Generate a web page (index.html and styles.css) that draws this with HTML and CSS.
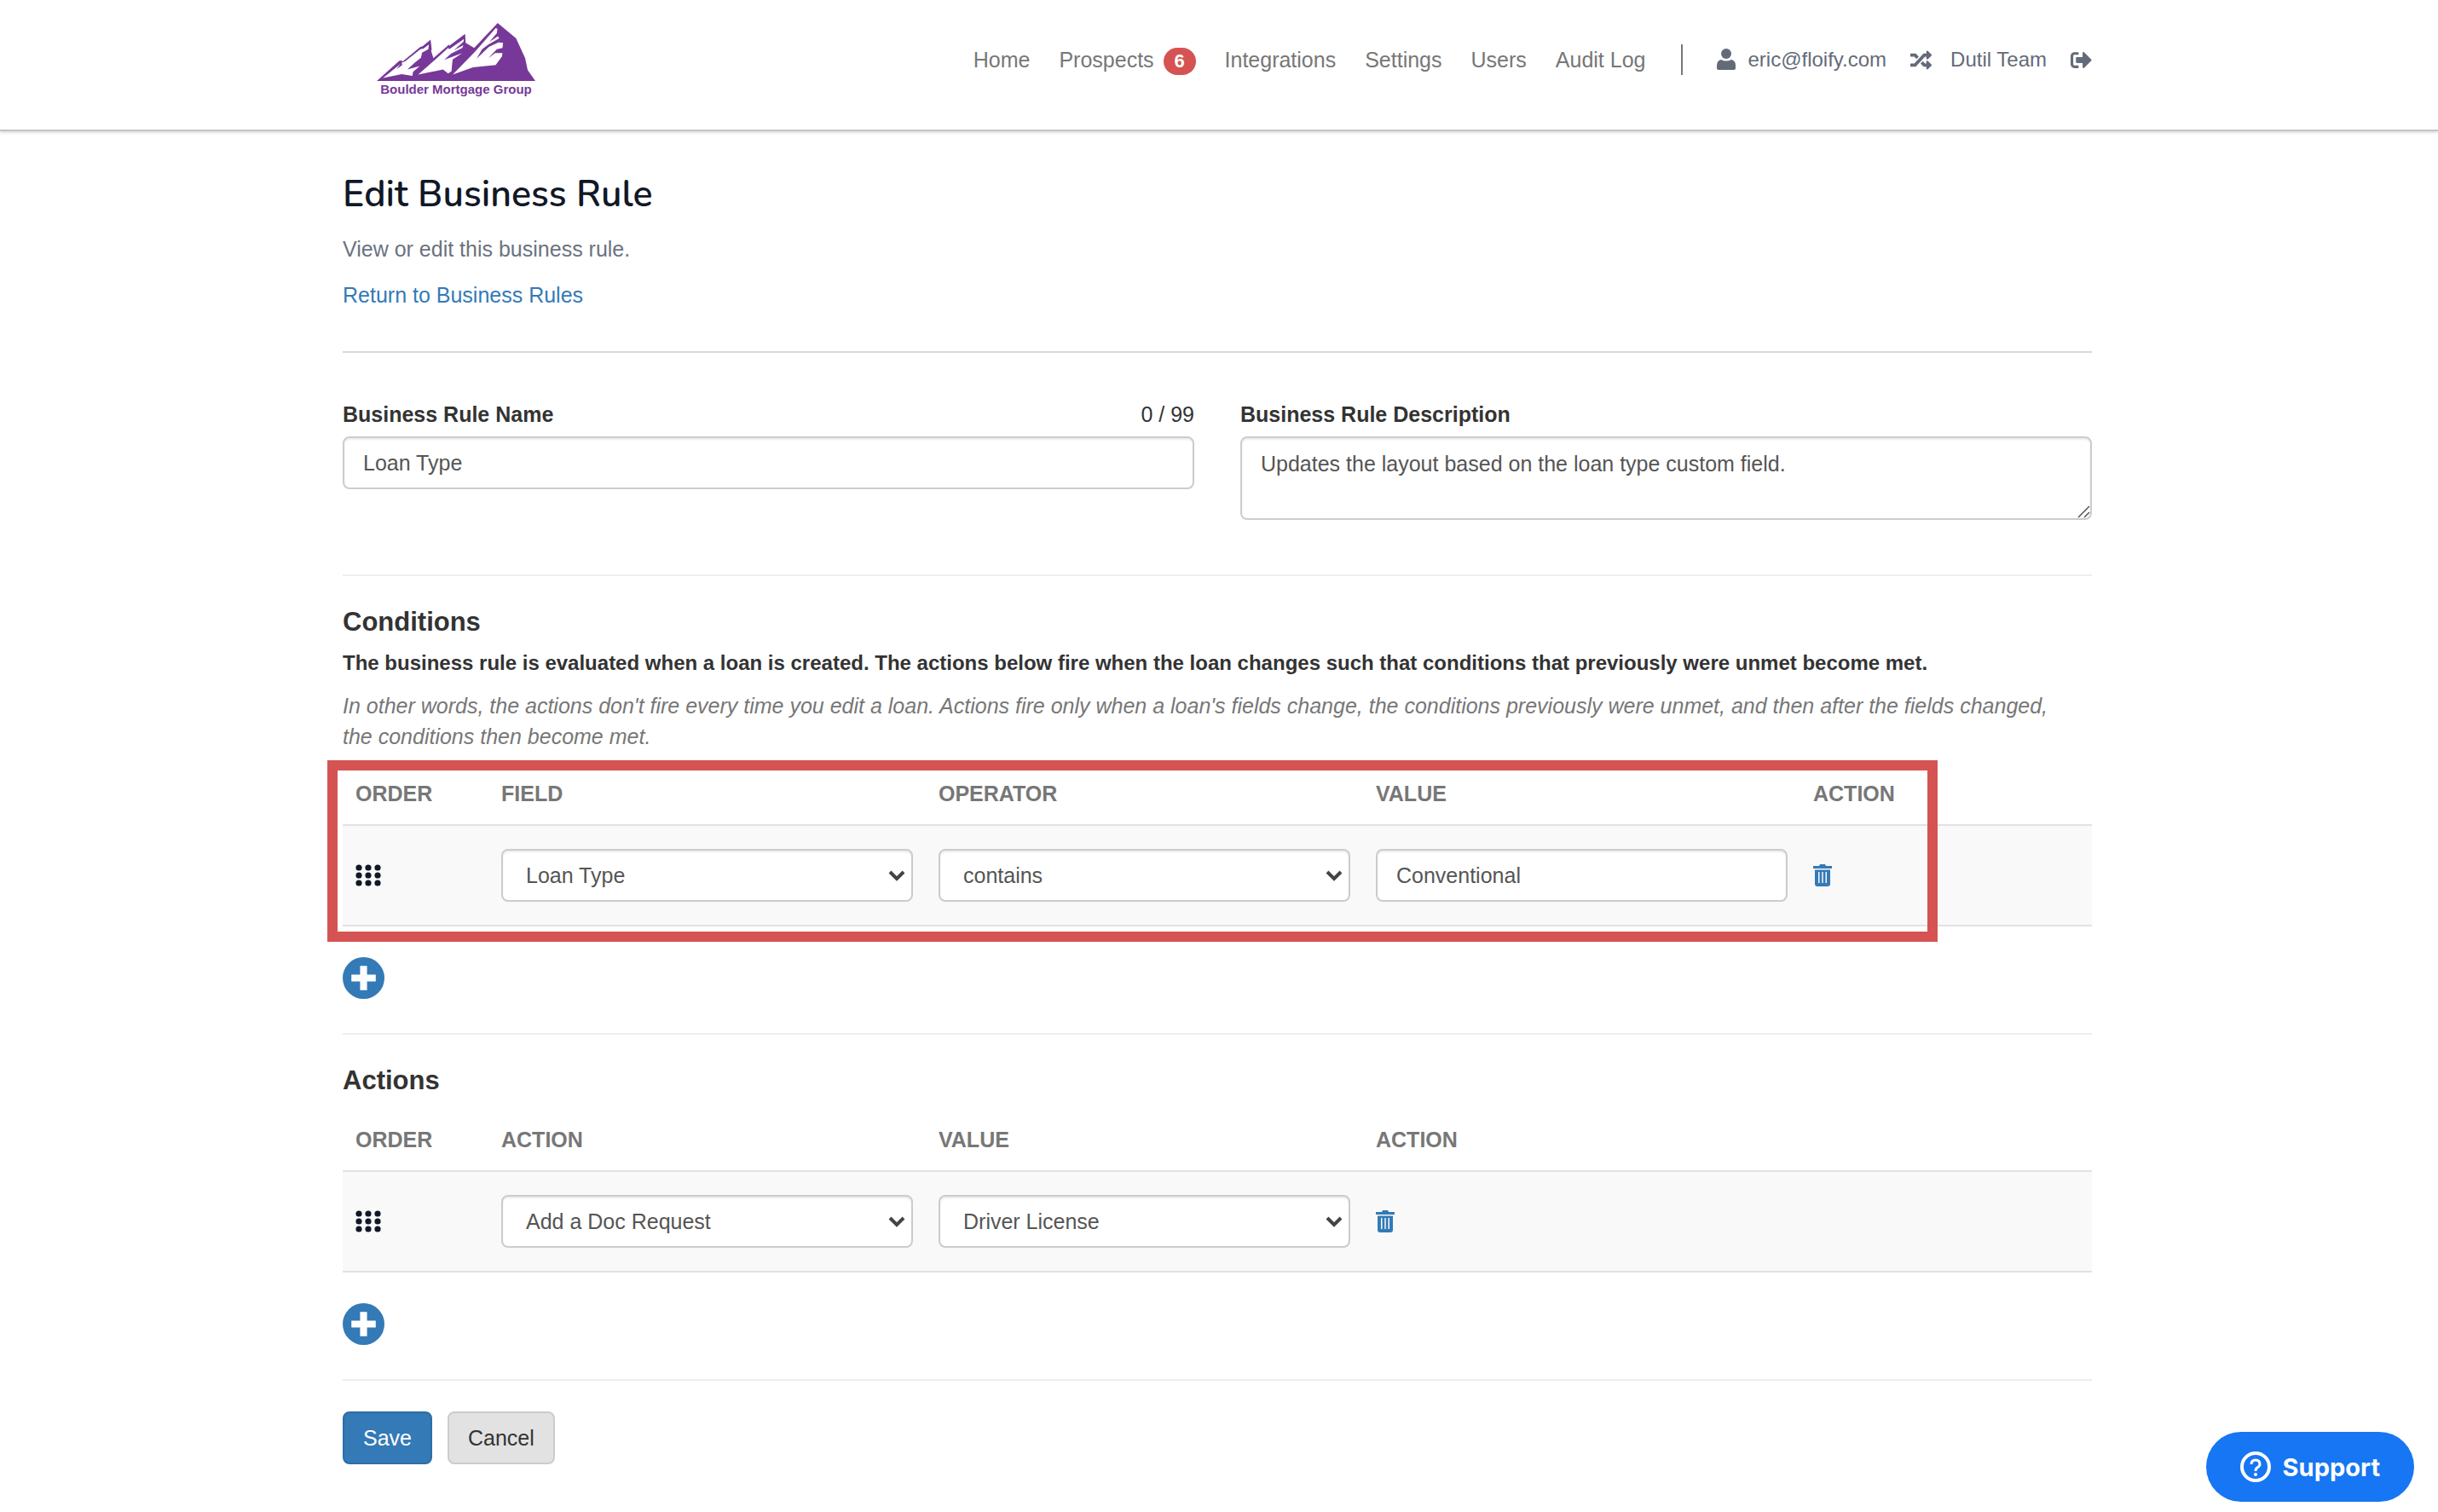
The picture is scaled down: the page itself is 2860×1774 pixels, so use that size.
FILE: index.html
```html
<!DOCTYPE html>
<html lang="en">

<head>
    <meta charset="UTF-8">
    <meta name="viewport" content="width=device-width, initial-scale=1.0">
    <title>Edit Business Rule</title>
    <link rel="stylesheet" href="styles.css">
</head>

<body>
    <header class="header">
        <div class="container header-inner">
            <a href="#" class="logo" aria-label="Boulder Mortgage Group">
                <svg viewBox="0 0 560 204" width="186" height="68">
                    <path fill="#773899" d="M0 204 L78 134 Q84 130 92 135 L154 84 L162 82 L190 58 L194 92 L192 98 L200 124 L250 80 L254 76 L256 80 L312 38 L314 70 L344 88 L427 0 L492 54 L524 124 L533 166 L560 204 Z"/>
                    <path fill="#fff" d="M22 194 L78 149 L84 143 L70 163 L90 148 L88 140 L100 135 L154 92 L165 90 L184 76 L182 92 L160 104 L156 122 L136 138 L108 164 L152 152 L128 172 L126 186 L88 180 Z"/>
                    <path fill="#fff" d="M146 182 L196 138 L252 88 L256 92 L308 56 L306 66 L272 96 L306 78 L302 88 L262 108 L238 130 L302 106 L268 128 L266 146 L264 170 L252 178 L234 164 Z"/>
                    <path fill="#fff" d="M268 182 L346 102 L420 18 L426 20 L424 36 L398 66 L428 46 L432 54 L394 76 L372 92 L352 126 L396 84 L430 68 L446 70 L444 88 L424 92 L394 124 L418 106 L444 106 L442 118 L420 148 L340 156 Z"/>
                </svg>
                <span class="logo-text">Boulder Mortgage Group</span>
            </a>
            <nav class="nav">
                <a href="#">Home</a>
                <a href="#">Prospects <span class="badge">6</span></a>
                <a href="#">Integrations</a>
                <a href="#">Settings</a>
                <a href="#">Users</a>
                <a href="#">Audit Log</a>
            </nav>
            <div class="account">
                <a href="#">
                    <svg class="icon-user" viewBox="0 0 22 26"><circle cx="11" cy="6" r="6"/><path d="M5 13Q11 16 17 13Q22 14 22 20V23Q22 25 19 25H3Q0 25 0 23V20Q0 14 5 13Z"/></svg>
                    eric@floify.com
                </a>
                <a href="#" class="team">
                    <svg class="icon-wide" viewBox="0 0 512 512"><path d="M504.971 359.029c9.373 9.373 9.373 24.569 0 33.941l-80 79.984c-15.01 15.01-40.971 4.49-40.971-16.971V416h-58.785a12.004 12.004 0 0 1-8.773-3.812l-70.556-75.596 53.333-57.143L352 336h32v-39.981c0-21.438 25.943-31.998 40.971-16.971l80 79.981zM12 176h84l52.781 56.551 53.333-57.143-70.556-75.596A11.999 11.999 0 0 0 122.785 96H12c-6.627 0-12 5.373-12 12v56c0 6.627 5.373 12 12 12zm372 0v39.984c0 21.460 25.961 31.980 40.971 16.971l80-79.984c9.373-9.373 9.373-24.569 0-33.941l-80-79.981C409.943 24.021 384 34.582 384 56.019V96h-58.785a12.004 12.004 0 0 0-8.773 3.812L96 336H12c-6.627 0-12 5.373-12 12v56c0 6.627 5.373 12 12 12h110.785c3.326 0 6.503-1.381 8.773-3.812L352 176h32z"/></svg>
                    Dutil Team
                </a>
                <a href="#" aria-label="Log out">
                    <svg class="icon-wide" viewBox="0 0 512 512"><path d="M497 273L329 441c-15 15-41 4.500-41-17v-96H152c-13.300 0-24-10.700-24-24v-96c0-13.300 10.700-24 24-24h136V88c0-21.400 25.900-32 41-17l168 168c9.300 9.400 9.300 24.600 0 34zM192 436v-40c0-6.600-5.400-12-12-12H96c-17.700 0-32-14.300-32-32V160c0-17.700 14.300-32 32-32h84c6.600 0 12-5.400 12-12V76c0-6.600-5.400-12-12-12H96c-53 0-96 43-96 96v192c0 53 43 96 96 96h84c6.600 0 12-5.400 12-12z"/></svg>
                </a>
            </div>
        </div>
    </header>

    <main class="container">
        <section class="intro">
            <h1>Edit Business Rule</h1>
            <p>View or edit this business rule.</p>
            <a href="#">Return to Business Rules</a>
        </section>

        <form>
            <section class="details">
                <div class="form-group">
                    <div class="label-row">
                        <label for="ruleName">Business Rule Name</label>
                        <span>0 / 99</span>
                    </div>
                    <input type="text" id="ruleName" class="form-control" value="Loan Type">
                </div>
                <div class="form-group">
                    <div class="label-row">
                        <label for="ruleDescription">Business Rule Description</label>
                    </div>
                    <textarea id="ruleDescription" class="form-control">Updates the layout based on the loan type custom field.</textarea>
                </div>
            </section>

            <section class="rule-section">
                <h2>Conditions</h2>
                <p class="lead">The business rule is evaluated when a loan is created. The actions below fire when the loan changes such that conditions that previously were unmet become met.</p>
                <p class="note">In other words, the actions don't fire every time you edit a loan. Actions fire only when a loan's fields change, the conditions previously were unmet, and then after the fields changed, the conditions then become met.</p>
                <div class="table-wrap">
                    <table class="rule-table">
                        <thead>
                            <tr>
                                <th class="col-order">Order</th>
                                <th class="col-field">Field</th>
                                <th class="col-field">Operator</th>
                                <th class="col-field">Value</th>
                                <th>Action</th>
                            </tr>
                        </thead>
                        <tbody>
                            <tr>
                                <td><svg class="icon-grip" viewBox="0 0 30 26"><circle cx="4" cy="4" r="3.600"/><circle cx="15" cy="4" r="3.600"/><circle cx="26" cy="4" r="3.600"/><circle cx="4" cy="13" r="3.600"/><circle cx="15" cy="13" r="3.600"/><circle cx="26" cy="13" r="3.600"/><circle cx="4" cy="22" r="3.600"/><circle cx="15" cy="22" r="3.600"/><circle cx="26" cy="22" r="3.600"/></svg></td>
                                <td><select class="form-control" aria-label="Field"><option>Loan Type</option></select></td>
                                <td><select class="form-control" aria-label="Operator"><option>contains</option></select></td>
                                <td><input type="text" class="form-control" aria-label="Value" value="Conventional"></td>
                                <td>
                                    <button type="button" class="icon-btn" aria-label="Delete condition">
                                        <svg class="icon-trash" viewBox="0 0 22 26"><path d="M0 2h7l1-2h6l1 2h7v3H0zM2 6.500h18V23q0 3-3 3H5q-3 0-3-3zM6 9v13h1.500V9zM10.250 9v13h1.500V9zM14.500 9v13H16V9z" fill-rule="evenodd"/></svg>
                                    </button>
                                </td>
                            </tr>
                        </tbody>
                    </table>
                    <div class="highlight"></div>
                </div>
                <button type="button" class="icon-btn add-btn" aria-label="Add condition">
                    <svg class="icon-add" viewBox="0 0 48 48"><circle cx="24" cy="24" r="24"/><path d="M20 10h8v10h10v8H28v10h-8V28H10v-8h10z" fill="#fff"/></svg>
                </button>
            </section>

            <section class="rule-section">
                <h2>Actions</h2>
                <div class="table-wrap">
                    <table class="rule-table">
                        <thead>
                            <tr>
                                <th class="col-order">Order</th>
                                <th class="col-field">Action</th>
                                <th class="col-field">Value</th>
                                <th>Action</th>
                            </tr>
                        </thead>
                        <tbody>
                            <tr>
                                <td><svg class="icon-grip" viewBox="0 0 30 26"><circle cx="4" cy="4" r="3.600"/><circle cx="15" cy="4" r="3.600"/><circle cx="26" cy="4" r="3.600"/><circle cx="4" cy="13" r="3.600"/><circle cx="15" cy="13" r="3.600"/><circle cx="26" cy="13" r="3.600"/><circle cx="4" cy="22" r="3.600"/><circle cx="15" cy="22" r="3.600"/><circle cx="26" cy="22" r="3.600"/></svg></td>
                                <td><select class="form-control" aria-label="Action"><option>Add a Doc Request</option></select></td>
                                <td><select class="form-control" aria-label="Value"><option>Driver License</option></select></td>
                                <td>
                                    <button type="button" class="icon-btn" aria-label="Delete action">
                                        <svg class="icon-trash" viewBox="0 0 22 26"><path d="M0 2h7l1-2h6l1 2h7v3H0zM2 6.500h18V23q0 3-3 3H5q-3 0-3-3zM6 9v13h1.500V9zM10.250 9v13h1.500V9zM14.500 9v13H16V9z" fill-rule="evenodd"/></svg>
                                    </button>
                                </td>
                            </tr>
                        </tbody>
                    </table>
                </div>
                <button type="button" class="icon-btn add-btn" aria-label="Add action">
                    <svg class="icon-add" viewBox="0 0 48 48"><circle cx="24" cy="24" r="24"/><path d="M20 10h8v10h10v8H28v10h-8V28H10v-8h10z" fill="#fff"/></svg>
                </button>
            </section>

            <div class="form-buttons">
                <button type="submit" class="btn btn-primary">Save</button>
                <button type="button" class="btn btn-default">Cancel</button>
            </div>
        </form>
    </main>

    <button type="button" class="support">
        <svg viewBox="0 0 36 36" width="36" height="36" fill="none" stroke="#fff"><circle cx="18" cy="18" r="16" stroke-width="4"/><path d="M13 15Q13 10 18 10T23 15Q23 17 20 19Q18 20 18 23" stroke-width="3"/><circle cx="18" cy="27" r="2" fill="#fff" stroke="none"/></svg>
        Support
    </button>
</body>

</html>
```

FILE: styles.css
```css
* {
    box-sizing: border-box;
}

body {
    margin: 0;
    font-family: "Liberation Sans", Arial, sans-serif;
    font-size: 25px;
    line-height: 36px;
    color: #333;
    background-color: #fff;
}

a {
    color: #337ab7;
    text-decoration: none;
}

h1,
h2,
p {
    margin: 0;
}

.container {
    max-width: 2056px;
    margin: 0 auto;
    padding-right: 4px;
}

/* Header */
.header {
    height: 154px;
    border-bottom: 2px solid #c4c4c4;
    box-shadow: 0 1px 4px rgba(0, 0, 0, 0.2);
}

.header-inner {
    display: flex;
    align-items: flex-start;
    padding-top: 27px;
}

.logo {
    display: flex;
    flex-direction: column;
    align-items: center;
    margin-left: 40px;
    margin-right: auto;
}

.logo svg {
    display: block;
}

.logo-text {
    font-size: 15px;
    line-height: 20px;
    font-weight: bold;
    color: #773899;
}

.nav {
    display: flex;
    gap: 34px;
    padding-top: 25px;
}

.nav a {
    color: #777;
}

.badge {
    display: inline-block;
    min-width: 38px;
    margin-left: 4px;
    font-size: 22px;
    line-height: 32px;
    font-weight: bold;
    text-align: center;
    color: #fff;
    background-color: #d65353;
    border-radius: 16px;
}

.account {
    display: flex;
    gap: 28px;
    margin-top: 25px;
    margin-left: 42px;
    padding-left: 40px;
    font-size: 24px;
    border-left: 2px solid #777;
}

.account a {
    display: flex;
    align-items: center;
    gap: 14px;
    color: #646b78;
}

.account .team {
    gap: 22px;
}

.account svg {
    fill: #646b78;
}

.icon-user {
    width: 22px;
    height: 26px;
}

.icon-wide {
    width: 25px;
    height: 25px;
}

/* Intro */
.intro {
    padding: 46px 0 48px;
    border-bottom: 2px solid #d9d9d9;
}

.intro h1 {
    margin-bottom: 18px;
    font-family: Nunito, "Open Sans", sans-serif;
    font-size: 43px;
    line-height: 56px;
    font-weight: 600;
    color: #111827;
}

.intro p {
    margin-bottom: 18px;
    color: #6b7280;
}

.intro a {
    display: block;
}

/* Form fields */
.details {
    display: grid;
    grid-template-columns: 1fr 1fr;
    gap: 54px;
    padding: 54px 0 64px;
}

.label-row {
    display: flex;
    justify-content: space-between;
    margin-bottom: 8px;
}

.label-row label {
    font-weight: bold;
}

.form-control {
    display: block;
    width: 100%;
    height: 62px;
    padding: 12px 22px;
    font-family: inherit;
    font-size: 25px;
    line-height: 36px;
    color: #555;
    background-color: #fff;
    border: 2px solid #ccc;
    border-radius: 8px;
    box-shadow: inset 0 2px 2px rgba(0, 0, 0, 0.075);
}

textarea.form-control {
    height: 98px;
    resize: vertical;
}

textarea.form-control::-webkit-resizer {
    background-image: url('data:image/svg+xml,<svg xmlns="http://www.w3.org/2000/svg" viewBox="0 0 15 15"><path d="M1 14L14 1M8 14l6-6" fill="none" stroke="%23555" stroke-width="1.500"/></svg>');
    background-repeat: no-repeat;
    background-size: 15px 15px;
}

select.form-control {
    appearance: none;
    padding: 0 27px;
    background-image: url('data:image/svg+xml,<svg xmlns="http://www.w3.org/2000/svg" viewBox="0 0 20 14"><path d="M2 3l8 8 8-8" fill="none" stroke="%23444" stroke-width="4"/></svg>');
    background-repeat: no-repeat;
    background-position: right 7px center;
    background-size: 20px 14px;
}

/* Conditions and actions */
.rule-section {
    padding-top: 36px;
    border-top: 2px solid #eee;
}

.rule-section h2 {
    margin-bottom: 12px;
    font-size: 31px;
    line-height: 36px;
    font-weight: bold;
}

.lead {
    margin-bottom: 14px;
    font-size: 24px;
    font-weight: bold;
}

.note {
    margin-bottom: 10px;
    padding-right: 20px;
    font-style: italic;
    color: #777;
}

.table-wrap {
    position: relative;
}

.rule-table {
    width: 100%;
    border-collapse: collapse;
    table-layout: fixed;
}

.rule-table th {
    padding: 21px 15px 18px;
    font-weight: bold;
    text-align: left;
    text-transform: uppercase;
    color: #777;
}

.rule-table td {
    padding: 27px 15px;
    background-color: #f9f9f9;
    border-top: 2px solid #e2e2e2;
    border-bottom: 2px solid #e2e2e2;
}

.col-order {
    width: 171px;
}

.col-field {
    width: 513px;
}

.icon-grip {
    display: block;
    width: 30px;
    height: 26px;
    fill: #111827;
}

.icon-btn {
    display: block;
    padding: 0;
    background: none;
    border: 0;
    cursor: pointer;
}

.icon-btn svg {
    display: block;
    fill: #337ab7;
}

.icon-trash {
    width: 22px;
    height: 26px;
}

.icon-add {
    width: 49px;
    height: 49px;
}

.add-btn {
    margin: 36px 0 40px;
}

/* Outline over the condition rows */
.highlight {
    position: absolute;
    top: 0;
    left: -18px;
    right: 181px;
    bottom: -18px;
    border: 12px solid #d65353;
    pointer-events: none;
}

/* Buttons */
.form-buttons {
    display: flex;
    gap: 18px;
    padding: 36px 0 58px;
    border-top: 2px solid #eee;
}

.btn {
    height: 62px;
    padding: 0 22px;
    font-family: inherit;
    font-size: 25px;
    border: 2px solid;
    border-radius: 8px;
    cursor: pointer;
}

.btn-primary {
    color: #fff;
    background-color: #337ab7;
    border-color: #2e6da4;
}

.btn-default {
    color: #333;
    background-color: #e2e2e2;
    border-color: #ccc;
}

.support {
    position: fixed;
    right: 28px;
    bottom: 12px;
    display: flex;
    align-items: center;
    gap: 14px;
    height: 82px;
    padding: 0 40px;
    font-family: Inter, sans-serif;
    font-size: 29px;
    font-weight: 700;
    color: #fff;
    background-color: #1676f3;
    border: 0;
    border-radius: 41px;
    cursor: pointer;
}
```
